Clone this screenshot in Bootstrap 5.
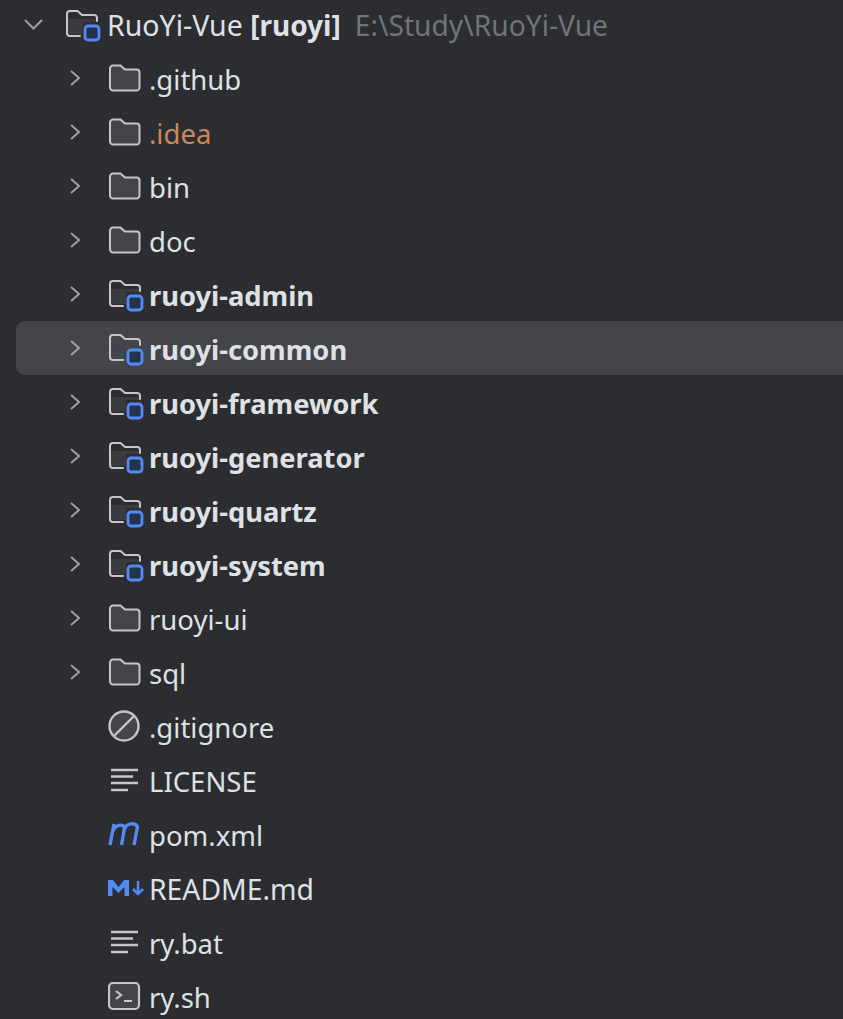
<!DOCTYPE html>
<html lang="en"><head><meta charset="utf-8"><title>Project tree</title>
<link rel="stylesheet" href="https://cdn.jsdelivr.net/npm/bootstrap@5.3.0/dist/css/bootstrap.min.css">
<style>
html,body{height:100%;}
body{background:#2b2d30;color:#dfe1e5;font-family:"Noto Sans","Open Sans",sans-serif;font-size:27.500px;overflow:hidden;}
.tree{margin-top:-3px;}
.tree-row{height:54px;padding-left:16px;}
.tree-row.sel{background:#43454a;border-radius:9px 0 0 9px;margin-left:16px;padding-left:0;}
.arrow{width:92px;flex:none;padding-left:53px;}
.arrow.root{width:49px;padding-left:8px;}
.ico{width:41px;flex:none;}
.ico.root{width:42px;}
.ico svg,.arrow svg{display:block;}
.lbl{white-space:nowrap;line-height:54px;position:relative;top:2px;}
.lbl.mod{font-weight:700;font-size:27.300px;}
.lbl.head{font-size:28.500px;top:1px;}
.lbl.head b{font-size:28px;}
.lbl.wide{font-size:28.300px;top:1px;}
.orange{color:#c98a5a;}
.path{color:#6f737a;margin-left:14px;font-size:28.200px;}
.fl{fill:#43454a;stroke:#c4c6cc;stroke-width:2;}
.fl2{fill:none;stroke:#c4c6cc;stroke-width:2;stroke-linecap:round;stroke-linejoin:round;}
.blue{fill:#25324d;stroke:#548af7;stroke-width:2.800;}
</style></head><body>
<svg width="0" height="0" class="position-absolute"><defs>
<symbol id="chev" viewBox="0 0 14 20"><path d="M2 3l8 7-8 7" fill="none" stroke="#9da0a8" stroke-width="2"/></symbol>
<symbol id="folder" viewBox="0 0 34 34"><path class="fl" d="M2 7.500a3 3 0 0 1 3-3h7.500l4.500 4h11.500a3 3 0 0 1 3 3v15a3 3 0 0 1-3 3H5a3 3 0 0 1-3-3z"/></symbol>
<symbol id="module" viewBox="0 0 36 36"><path d="M3 13h28v3H18v12H3z" fill="#43454a" opacity=".6"/><path class="fl2" d="M15 30H5a3 3 0 0 1-3-3V8a3 3 0 0 1 3-3h7.500l4.500 4h12a3 3 0 0 1 3 3v3"/><rect class="blue" x="20" y="20" width="14" height="14" rx="3"/></symbol>
<symbol id="text" viewBox="0 0 34 34"><path d="M3 7h27M3 13.500h22M3 20h27M3 27h17" stroke="#c4c6cc" stroke-width="2.400" fill="none"/></symbol>
</defs></svg>
<main class="tree">
<div class="tree-row d-flex align-items-center">
 <div class="arrow root"><svg width="20" height="14" viewBox="0 0 20 14"><path d="M1 3l8.500 8.500L18 3" fill="none" stroke="#9da0a8" stroke-width="2"/></svg></div>
 <div class="ico root"><svg width="36" height="36"><use href="#module"/></svg></div>
 <div class="lbl head">RuoYi-Vue <b>[ruoyi]</b><span class="path">E:\Study\RuoYi-Vue</span></div>
</div>
<div class="tree-row d-flex align-items-center"><div class="arrow"><svg width="14" height="20"><use href="#chev"/></svg></div><div class="ico"><svg width="34" height="34"><use href="#folder"/></svg></div><div class="lbl">.github</div></div>
<div class="tree-row d-flex align-items-center"><div class="arrow"><svg width="14" height="20"><use href="#chev"/></svg></div><div class="ico"><svg width="34" height="34"><use href="#folder"/></svg></div><div class="lbl orange">.idea</div></div>
<div class="tree-row d-flex align-items-center"><div class="arrow"><svg width="14" height="20"><use href="#chev"/></svg></div><div class="ico"><svg width="34" height="34"><use href="#folder"/></svg></div><div class="lbl">bin</div></div>
<div class="tree-row d-flex align-items-center"><div class="arrow"><svg width="14" height="20"><use href="#chev"/></svg></div><div class="ico"><svg width="34" height="34"><use href="#folder"/></svg></div><div class="lbl">doc</div></div>
<div class="tree-row d-flex align-items-center"><div class="arrow"><svg width="14" height="20"><use href="#chev"/></svg></div><div class="ico"><svg width="36" height="36"><use href="#module"/></svg></div><div class="lbl mod">ruoyi-admin</div></div>
<div class="tree-row sel d-flex align-items-center"><div class="arrow"><svg width="14" height="20"><use href="#chev"/></svg></div><div class="ico"><svg width="36" height="36"><use href="#module"/></svg></div><div class="lbl mod">ruoyi-common</div></div>
<div class="tree-row d-flex align-items-center"><div class="arrow"><svg width="14" height="20"><use href="#chev"/></svg></div><div class="ico"><svg width="36" height="36"><use href="#module"/></svg></div><div class="lbl mod">ruoyi-framework</div></div>
<div class="tree-row d-flex align-items-center"><div class="arrow"><svg width="14" height="20"><use href="#chev"/></svg></div><div class="ico"><svg width="36" height="36"><use href="#module"/></svg></div><div class="lbl mod">ruoyi-generator</div></div>
<div class="tree-row d-flex align-items-center"><div class="arrow"><svg width="14" height="20"><use href="#chev"/></svg></div><div class="ico"><svg width="36" height="36"><use href="#module"/></svg></div><div class="lbl mod">ruoyi-quartz</div></div>
<div class="tree-row d-flex align-items-center"><div class="arrow"><svg width="14" height="20"><use href="#chev"/></svg></div><div class="ico"><svg width="36" height="36"><use href="#module"/></svg></div><div class="lbl mod">ruoyi-system</div></div>
<div class="tree-row d-flex align-items-center"><div class="arrow"><svg width="14" height="20"><use href="#chev"/></svg></div><div class="ico"><svg width="34" height="34"><use href="#folder"/></svg></div><div class="lbl">ruoyi-ui</div></div>
<div class="tree-row d-flex align-items-center"><div class="arrow"><svg width="14" height="20"><use href="#chev"/></svg></div><div class="ico"><svg width="34" height="34"><use href="#folder"/></svg></div><div class="lbl">sql</div></div>
<div class="tree-row d-flex align-items-center"><div class="arrow"></div><div class="ico"><svg width="32" height="34" viewBox="0 0 32 34"><circle cx="16" cy="17" r="14.500" fill="#43454a" stroke="#c4c6cc" stroke-width="2.400"/><path d="M6.500 26.500L25.500 7.500" stroke="#c4c6cc" stroke-width="2.400"/></svg></div><div class="lbl">.gitignore</div></div>
<div class="tree-row d-flex align-items-center"><div class="arrow"></div><div class="ico"><svg width="34" height="34"><use href="#text"/></svg></div><div class="lbl">LICENSE</div></div>
<div class="tree-row d-flex align-items-center"><div class="arrow"></div><div class="ico"><svg width="34" height="26" viewBox="0 0 34 26"><path d="M2 24L6 3M5 10c2-6 10-8 11.500-3L13.500 24M16.500 8c2-6 11-7 13-2l-3.500 18" fill="none" stroke="#548af7" stroke-width="3.400"/></svg></div><div class="lbl">pom.xml</div></div>
<div class="tree-row d-flex align-items-center"><div class="arrow"></div><div class="ico"><svg width="36" height="16" viewBox="0 0 36 16"><path d="M0 16V0h5l5.500 7L16 0h5v16h-4.500V7L10.500 13 4.500 7v9z" fill="#548af7"/><path d="M30 1v13M25 9l5 5 5-5" fill="none" stroke="#548af7" stroke-width="2.500"/></svg></div><div class="lbl wide">README.md</div></div>
<div class="tree-row d-flex align-items-center"><div class="arrow"></div><div class="ico"><svg width="34" height="34"><use href="#text"/></svg></div><div class="lbl">ry.bat</div></div>
<div class="tree-row d-flex align-items-center"><div class="arrow"></div><div class="ico"><svg width="34" height="34" viewBox="0 0 34 34"><rect x="1" y="4" width="30" height="26" rx="4" fill="#43454a" stroke="#c4c6cc" stroke-width="2.200"/><path d="M8 12l5 4-5 4M16 22h8" fill="none" stroke="#c4c6cc" stroke-width="2.200"/></svg></div><div class="lbl">ry.sh</div></div>
</main>
<script src="https://cdn.jsdelivr.net/npm/bootstrap@5.3.0/dist/js/bootstrap.bundle.min.js"></script>
</body></html>
